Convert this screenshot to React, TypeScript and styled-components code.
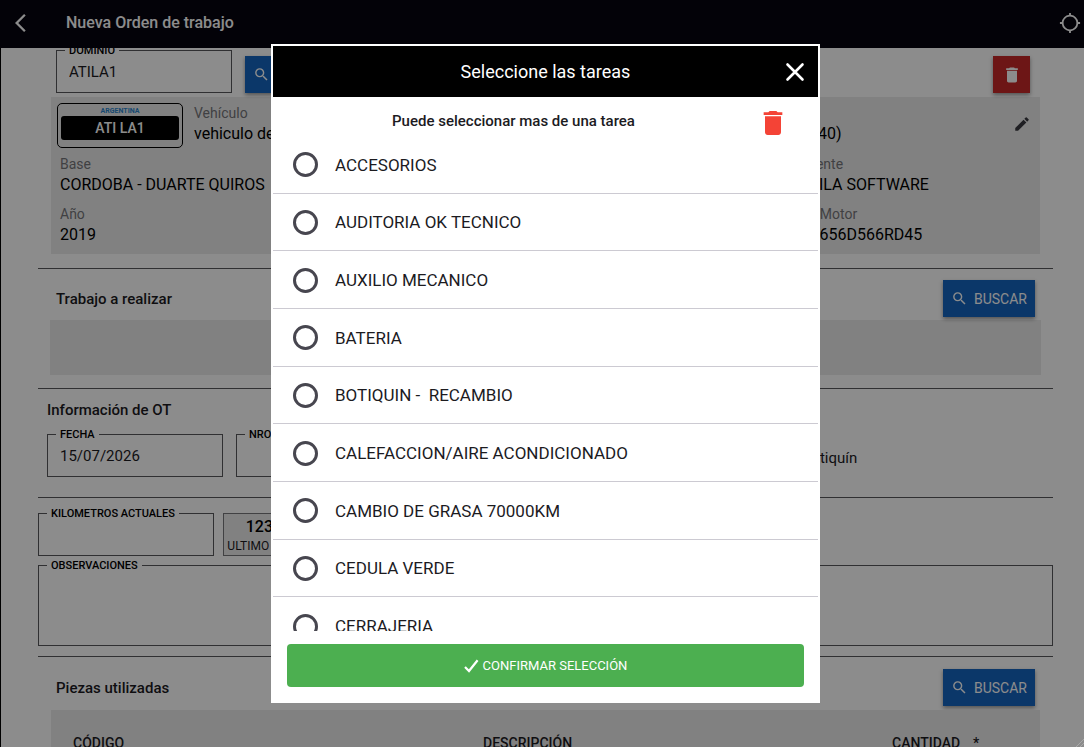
import React, { useState } from "react";
import styled, { createGlobalStyle, css } from "styled-components";
import {
  MdArrowBackIos,
  MdDelete,
  MdEdit,
  MdLocationSearching,
  MdSearch,
} from "react-icons/md";

const GlobalStyle = createGlobalStyle`
  *, *::before, *::after { box-sizing: border-box; }
  body { margin: 0; overflow: hidden; background: #fff; }
  body, button, input, textarea, table {
    font-family: Roboto, "Liberation Sans", sans-serif;
    color: #1c1b1f;
  }
  button { cursor: pointer; }
`;

/* ---------- page ---------- */

const Page = styled.div`
  display: flex;
  flex-direction: column;
  height: 100vh;
  overflow: hidden;
`;

const AppBar = styled.header`
  display: flex;
  align-items: center;
  flex: none;
  height: 48px;
  padding: 0 3px 2px 15px;
  background: #06040f;
  color: #fff;
`;

const BarButton = styled.button`
  display: flex;
  padding: 0;
  border: 0;
  background: none;
  color: inherit;
`;

const PageTitle = styled.h1`
  flex: 1;
  margin: 0 0 0 29px;
  font-size: 16px;
  line-height: 24px;
  font-weight: 500;
`;

const Main = styled.main`
  flex: 1;
  min-height: 0;
  overflow: hidden;
  padding: 0 31px 0 37px;
  border-left: 1px solid #000;
`;

const Scrolled = styled.form`
  display: flex;
  flex-direction: column;
  margin-top: -5px;
`;

const Section = styled.section`
  border-bottom: 1px solid #58585c;
`;

const VehicleSection = styled(Section)`
  padding: 0 13px 14px;
`;

const SearchRow = styled.div`
  display: flex;
  align-items: flex-end;
  gap: 13px;
  padding: 0 10px 0 5px;
  margin-bottom: 4px;
`;

const Spacer = styled.div`
  flex: 1;
`;

const Fieldset = styled.fieldset<{ $tall?: boolean }>`
  width: ${(p) => (p.$tall ? "100%" : "176px")};
  height: ${(p) => (p.$tall ? "88px" : "50px")};
  flex: none;
  min-width: 0;
  margin: 0;
  padding: 0 8px;
  border: 1px solid #58585c;
`;

const Legend = styled.legend`
  padding: 2px 4px 0;
  font-size: 11px;
  line-height: 12px;
  font-weight: 500;
  color: #000;
  white-space: nowrap;
`;

const inputStyle = css`
  display: block;
  width: 100%;
  padding: 0 4px;
  border: 0;
  outline: 0;
  background: none;
  font-size: 15px;
`;

const TextInput = styled.input`
  ${inputStyle}
  height: 29px;
`;

const TextArea = styled.textarea`
  ${inputStyle}
  height: 66px;
  resize: none;
`;

const ActionButton = styled.button<{ $danger?: boolean }>`
  display: flex;
  align-items: center;
  justify-content: center;
  gap: 6px;
  width: ${(p) => (p.$danger ? "37px" : "92px")};
  height: 37px;
  padding: 0;
  border: 0;
  background: ${(p) => (p.$danger ? "#c62828" : "#1565c0")};
  color: #fff;
  font-size: 14px;
  box-shadow: 0 2px 4px rgba(0, 0, 0, 0.4);
`;

const Panel = styled.div`
  background: #ececec;
`;

const VehiclePanel = styled(Panel)`
  display: grid;
  grid-template-columns: 134px 1fr 240px;
  grid-template-rows: 55px 50px 52px;
  padding-left: 9px;
`;

const Info = styled.dl<{ $wide?: boolean }>`
  grid-column: ${(p) => (p.$wide ? "span 2" : "auto")};
  margin: 0;
  padding-top: 3px;
`;

const InfoHead = styled(Info)`
  padding-top: 7px;
`;

const Term = styled.dt`
  height: 20px;
  font-size: 14px;
  line-height: 19px;
  color: #76767a;
`;

const Value = styled.dd`
  margin: 0;
  font-size: 16px;
  line-height: 20px;
  color: #000;
  white-space: nowrap;
`;

const Plate = styled.div`
  width: 126px;
  height: 45px;
  margin: 6px 0 0 -3px;
  padding: 3px;
  border: 1px solid #000;
  border-radius: 5px;
  text-align: center;
`;

const PlateCountry = styled.div`
  font-size: 7px;
  line-height: 9px;
  font-weight: 700;
  color: #2a84cc;
`;

const PlateNumber = styled.div`
  border-radius: 3px;
  background: #000;
  color: #fff;
  font-size: 14px;
  line-height: 24px;
  font-weight: 500;
`;

const EditCell = styled.div`
  display: flex;
  justify-content: space-between;
  align-items: flex-start;
  padding-right: 9px;
`;

const EditButton = styled(BarButton)`
  margin-top: 18px;
  color: #3a3a40;
`;

const SectionHead = styled.div`
  display: flex;
  align-items: center;
  justify-content: space-between;
  padding: 11px 18px 3px;
`;

const SectionTitle = styled.h2`
  margin: 0;
  font-size: 15px;
  line-height: 20px;
  font-weight: 500;
`;

const EmptyPanel = styled(Panel)`
  height: 55px;
  margin: 0 12px 13px;
`;

const InfoSection = styled(Section)`
  padding: 11px 9px 20px;
`;

const FieldRow = styled.div`
  display: grid;
  grid-template-columns: 176px 176px 1fr 270px;
  column-gap: 13px;
  margin-top: 7px;
`;

const CheckLabel = styled.label`
  grid-column: 4;
  display: flex;
  align-items: center;
  gap: 8px;
  padding-top: 12px;
  font-size: 15px;
`;

const KmSection = styled(Section)`
  padding: 8px 0 10px;
`;

const KmRow = styled.div`
  display: flex;
  align-items: flex-end;
  gap: 9px;
  margin-bottom: 2px;
`;

const LastKm = styled.div`
  display: flex;
  flex-direction: column;
  align-items: center;
  width: 100px;
  height: 43px;
  padding-top: 3px;
  border: 1px solid #77777a;
  background: #ececec;
  white-space: nowrap;
`;

const KmNumber = styled.strong`
  font-size: 16px;
  line-height: 20px;
  font-weight: 500;
  color: #000;
`;

const KmCaption = styled.span`
  font-size: 12px;
  line-height: 18px;
`;

const PartsHead = styled(SectionHead)`
  padding-top: 12px;
  padding-bottom: 4px;
`;

const PartsPanel = styled(Panel)`
  margin: 0 13px;
  padding: 23px 0 20px 22px;
`;

const Table = styled.table`
  width: 100%;
  border-collapse: collapse;
  table-layout: fixed;

  th {
    padding: 0;
    font-size: 14px;
    line-height: 20px;
    font-weight: 500;
    text-align: left;
  }
  th:nth-child(2) { width: 409px; }
  th:nth-child(3) { width: 81px; }
  th:nth-child(4) { width: 67px; }
`;

const Grip = styled.svg`
  position: fixed;
  right: 0;
  bottom: 0;
`;

/* ---------- dialog ---------- */

const Scrim = styled.div`
  position: fixed;
  inset: 0;
  display: flex;
  padding: 44px 264px 44px 271px;
  background: rgba(0, 0, 0, 0.45);
`;

const Dialog = styled.div`
  display: flex;
  flex-direction: column;
  flex: 1;
  min-width: 0;
  border: 2px solid #fff;
  background: #fff;
`;

const DialogBar = styled.div`
  display: grid;
  grid-template-columns: 1fr auto 1fr;
  align-items: center;
  flex: none;
  height: 51px;
  padding: 0 13px;
  background: #000;
  color: #fff;
`;

const DialogTitle = styled.h2`
  grid-column: 2;
  margin: 0;
  font-size: 18px;
  line-height: 24px;
  font-weight: 400;
`;

const CloseButton = styled(BarButton)`
  justify-self: end;
`;

const Hint = styled.div`
  display: flex;
  align-items: flex-start;
  flex: none;
  height: 39px;
  padding: 10px 29px 0 0;
`;

const HintText = styled.p`
  flex: 1;
  margin: 0 3px 0 0;
  font-size: 15px;
  line-height: 29px;
  font-weight: 500;
  text-align: center;
`;

const ClearButton = styled(BarButton)`
  color: #f44336;
`;

const ListViewport = styled.div`
  flex: 1;
  min-height: 0;
  overflow: hidden;
`;

const TaskList = styled.ul`
  display: grid;
  grid-auto-rows: 1fr;
  height: 519px;
  margin: 0;
  padding: 0;
  list-style: none;
`;

const TaskItem = styled.li`
  border-bottom: 1px solid #cccad2;
`;

const TaskLabel = styled.label`
  display: flex;
  align-items: center;
  gap: 17px;
  height: 100%;
  padding: 1px 20px 0;
  font-size: 17px;
  white-space: pre;
`;

const RoundCheck = styled.input`
  appearance: none;
  flex: none;
  width: 25px;
  height: 25px;
  margin: 0;
  border: 3px solid #47464f;
  border-radius: 50%;

  &:checked {
    background: #4caf50;
  }
`;

const DialogFooter = styled.div`
  display: flex;
  flex: none;
  padding: 13px 14px 14px;
`;

const ConfirmButton = styled.button`
  display: flex;
  align-items: center;
  justify-content: center;
  gap: 4px;
  flex: 1;
  height: 43px;
  border: 0;
  border-radius: 4px;
  background: #4caf50;
  color: #fff;
  font-size: 13px;
`;

const TASKS = [
  "ACCESORIOS",
  "AUDITORIA OK TECNICO",
  "AUXILIO MECANICO",
  "BATERIA",
  "BOTIQUIN -  RECAMBIO",
  "CALEFACCION/AIRE ACONDICIONADO",
  "CAMBIO DE GRASA 70000KM",
  "CEDULA VERDE",
  "CERRAJERIA",
];

type FieldProps = {
  id: string;
  label: string;
  value?: string;
  multiline?: boolean;
};

function Field({ id, label, value, multiline }: FieldProps) {
  return (
    <Fieldset $tall={multiline}>
      <Legend>
        <label htmlFor={id}>{label}</label>
      </Legend>
      {multiline ? (
        <TextArea id={id} defaultValue={value} />
      ) : (
        <TextInput id={id} defaultValue={value} />
      )}
    </Fieldset>
  );
}

function SearchButton() {
  return (
    <ActionButton type="button">
      <MdSearch size={17} />
      BUSCAR
    </ActionButton>
  );
}

function TaskDialog() {
  const [selected, setSelected] = useState<string[]>([]);
  const toggle = (task: string) =>
    setSelected((s) =>
      s.includes(task) ? s.filter((t) => t !== task) : [...s, task]
    );

  return (
    <Scrim>
      <Dialog role="dialog" aria-modal="true" aria-labelledby="dialog-title">
        <DialogBar>
          <DialogTitle id="dialog-title">Seleccione las tareas</DialogTitle>
          <CloseButton type="button" aria-label="Cerrar">
            <svg width="20" height="20" viewBox="0 0 20 20" fill="none" stroke="#fff" strokeWidth="2.6" strokeLinecap="round">
              <path d="M2.5 2.5l15 15M17.5 2.5l-15 15" />
            </svg>
          </CloseButton>
        </DialogBar>
        <Hint>
          <HintText>Puede seleccionar mas de una tarea</HintText>
          <ClearButton type="button" aria-label="Limpiar" onClick={() => setSelected([])}>
            <MdDelete size={32} />
          </ClearButton>
        </Hint>
        <ListViewport>
          <TaskList>
            {TASKS.map((task) => (
              <TaskItem key={task}>
                <TaskLabel>
                  <RoundCheck
                    type="checkbox"
                    checked={selected.includes(task)}
                    onChange={() => toggle(task)}
                  />
                  {task}
                </TaskLabel>
              </TaskItem>
            ))}
          </TaskList>
        </ListViewport>
        <DialogFooter>
          <ConfirmButton type="button">
            <svg width="15" height="14" viewBox="0 0 15 14" fill="none" stroke="#fff" strokeWidth="2.2">
              <path d="M1 8l4 4L13.6 1.2" />
            </svg>
            CONFIRMAR SELECCIÓN
          </ConfirmButton>
        </DialogFooter>
      </Dialog>
    </Scrim>
  );
}

export default function App() {
  return (
    <Page>
      <GlobalStyle />
      <AppBar>
        <BarButton type="button" aria-label="Volver">
          <MdArrowBackIos size={22} />
        </BarButton>
        <PageTitle>Nueva Orden de trabajo</PageTitle>
        <BarButton type="button" aria-label="Ubicación">
          <MdLocationSearching size={22} />
        </BarButton>
      </AppBar>

      <Main>
        <Scrolled>
          <VehicleSection>
            <SearchRow>
              <Field id="dominio" label="DOMINIO" value="ATILA1" />
              <SearchButton />
              <Spacer />
              <ActionButton type="button" $danger aria-label="Eliminar">
                <MdDelete size={20} />
              </ActionButton>
            </SearchRow>
            <VehiclePanel>
              <Plate>
                <PlateCountry>ARGENTINA</PlateCountry>
                <PlateNumber>ATI LA1</PlateNumber>
              </Plate>
              <InfoHead>
                <Term>Vehículo</Term>
                <Value>vehiculo de</Value>
              </InfoHead>
              <EditCell>
                <InfoHead>
                  <Term />
                  <Value>2040)</Value>
                </InfoHead>
                <EditButton type="button" aria-label="Editar">
                  <MdEdit size={18} />
                </EditButton>
              </EditCell>
              <Info $wide>
                <Term>Base</Term>
                <Value>CORDOBA - DUARTE QUIROS</Value>
              </Info>
              <Info>
                <Term>Cliente</Term>
                <Value>ATILA SOFTWARE</Value>
              </Info>
              <Info $wide>
                <Term>Año</Term>
                <Value>2019</Value>
              </Info>
              <Info>
                <Term>Nº Motor</Term>
                <Value>A5656D566RD45</Value>
              </Info>
            </VehiclePanel>
          </VehicleSection>

          <Section>
            <SectionHead>
              <SectionTitle>Trabajo a realizar</SectionTitle>
              <SearchButton />
            </SectionHead>
            <EmptyPanel />
          </Section>

          <InfoSection>
            <SectionTitle>Información de OT</SectionTitle>
            <FieldRow>
              <Field id="fecha" label="FECHA" value="15/07/2026" />
              <Field id="nro" label="NRO OT" />
              <CheckLabel>
                <input type="checkbox" />
                Botiquín
              </CheckLabel>
            </FieldRow>
          </InfoSection>

          <KmSection>
            <KmRow>
              <Field id="km" label="KILOMETROS ACTUALES" />
              <LastKm>
                <KmNumber>123456</KmNumber>
                <KmCaption>ULTIMO KM REG.</KmCaption>
              </LastKm>
            </KmRow>
            <Field id="obs" label="OBSERVACIONES" multiline />
          </KmSection>

          <PartsHead>
            <SectionTitle>Piezas utilizadas</SectionTitle>
            <SearchButton />
          </PartsHead>
          <PartsPanel>
            <Table>
              <thead>
                <tr>
                  <th>CÓDIGO</th>
                  <th>DESCRIPCIÓN</th>
                  <th>CANTIDAD</th>
                  <th>*</th>
                </tr>
              </thead>
            </Table>
          </PartsPanel>
        </Scrolled>
      </Main>

      <TaskDialog />
      <Grip width="8" height="8" viewBox="0 0 8 8" stroke="#a8a8a8" aria-hidden="true">
        <path d="M0 8L8 0M4 8L8 4" />
      </Grip>
    </Page>
  );
}
